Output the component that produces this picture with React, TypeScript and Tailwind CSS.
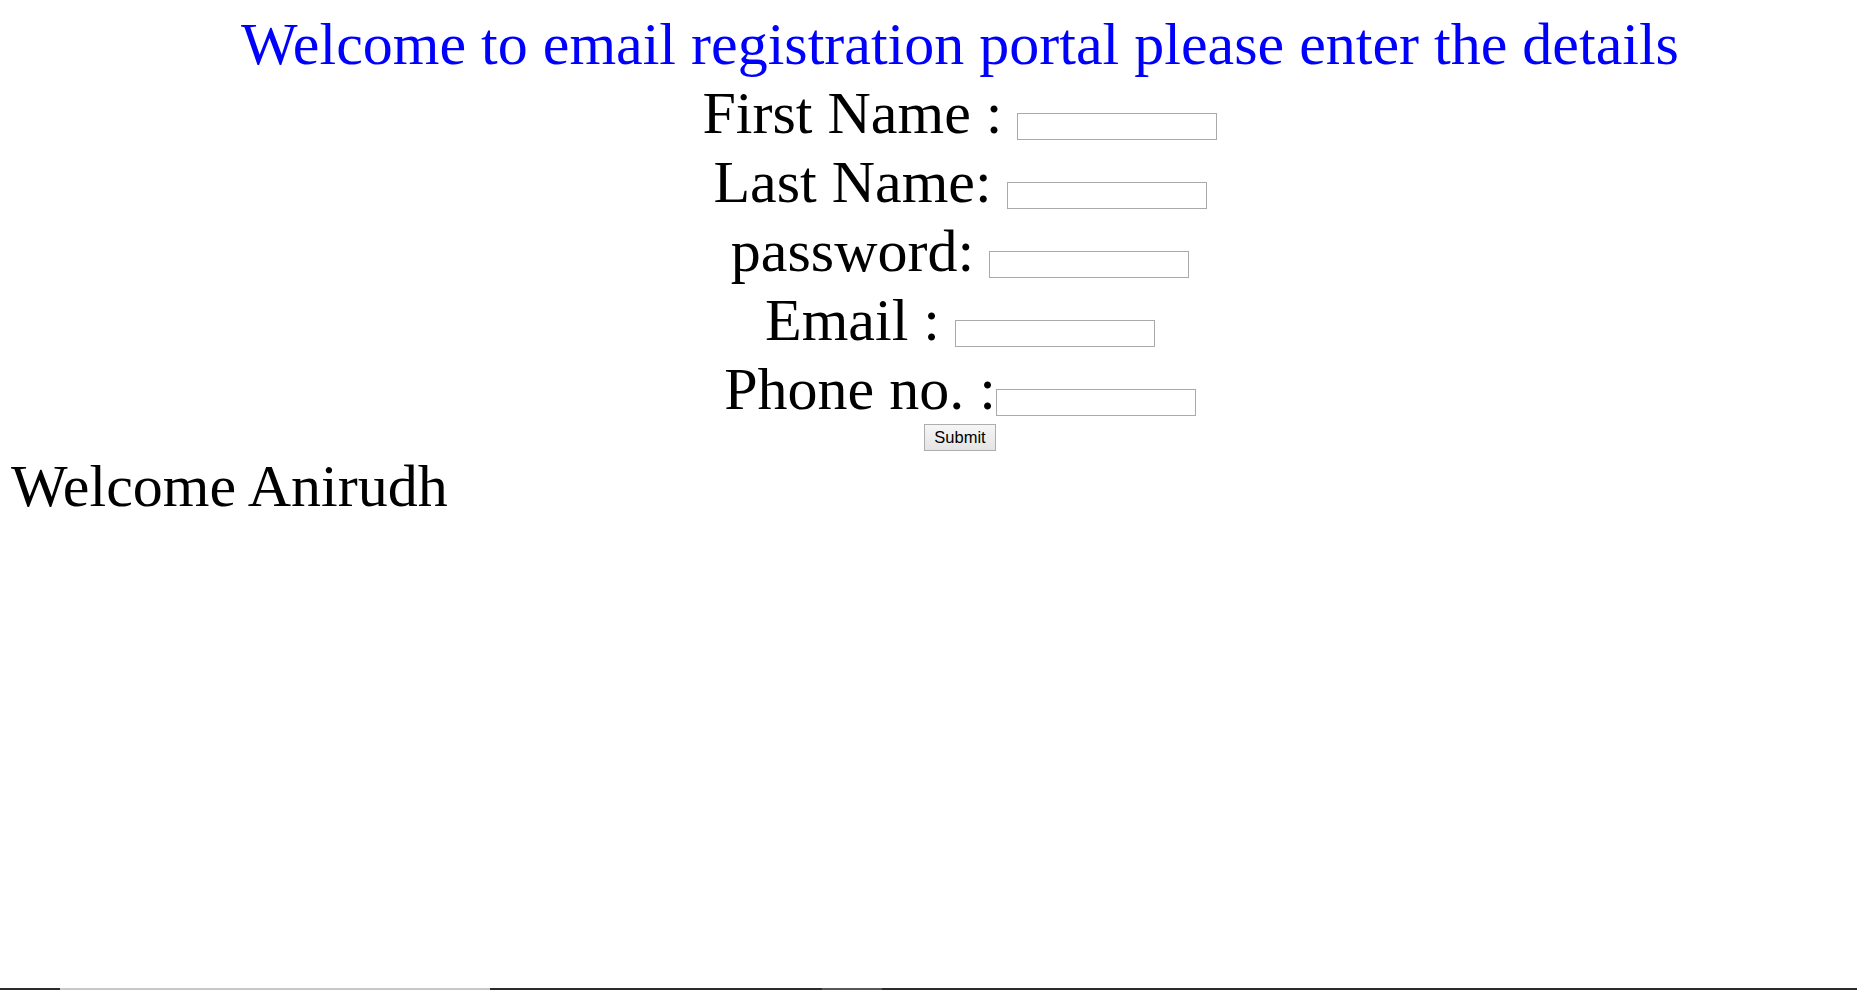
import React from "react";

function Field({ label }: { label: string }) {
  return (
    <div>
      {label}
      <input
        type="text"
        className="mt-[34px] inline-block h-[27px] w-[200px] border border-[#a9a9a9] bg-white align-top font-['Liberation_Sans',Arial,sans-serif] text-[16px] leading-normal outline-none"
      />
    </div>
  );
}

export default function App() {
  return (
    <div className="flex min-h-[990px] w-full flex-col overflow-hidden bg-white font-['Liberation_Serif','Times_New_Roman',serif] text-black">
      <div className="flex-1 pt-[10px]">
        <div className="pl-[63px] text-center text-[60px] leading-[69px]">
          <div className="text-[#0000ff]">
            Welcome to email registration portal please enter the details
          </div>
          <Field label="First Name : " />
          <Field label="Last Name: " />
          <Field label="password: " />
          <Field label="Email : " />
          <Field label="Phone no. :" />
          <div className="flex h-[28px] justify-center">
            <button
              type="submit"
              className="h-[27px] w-[72px] border border-[#adadad] bg-gradient-to-b from-[#f6f6f6] to-[#e4e4e4] font-['Liberation_Sans',Arial,sans-serif] text-[16.5px] leading-none text-black"
            >
              Submit
            </button>
          </div>
        </div>
        <div className="pl-[11px] text-[60px] leading-[69px]">Welcome Anirudh</div>
      </div>
      <div className="flex h-[2px] w-full">
        <div className="w-[60px] bg-[#2b2b2b]" />
        <div className="w-[430px] bg-[#c8c8c8]" />
        <div className="w-[332px] bg-[#2b2b2b]" />
        <div className="w-[60px] bg-[#575757]" />
        <div className="flex-1 bg-[#2b2b2b]" />
      </div>
    </div>
  );
}
